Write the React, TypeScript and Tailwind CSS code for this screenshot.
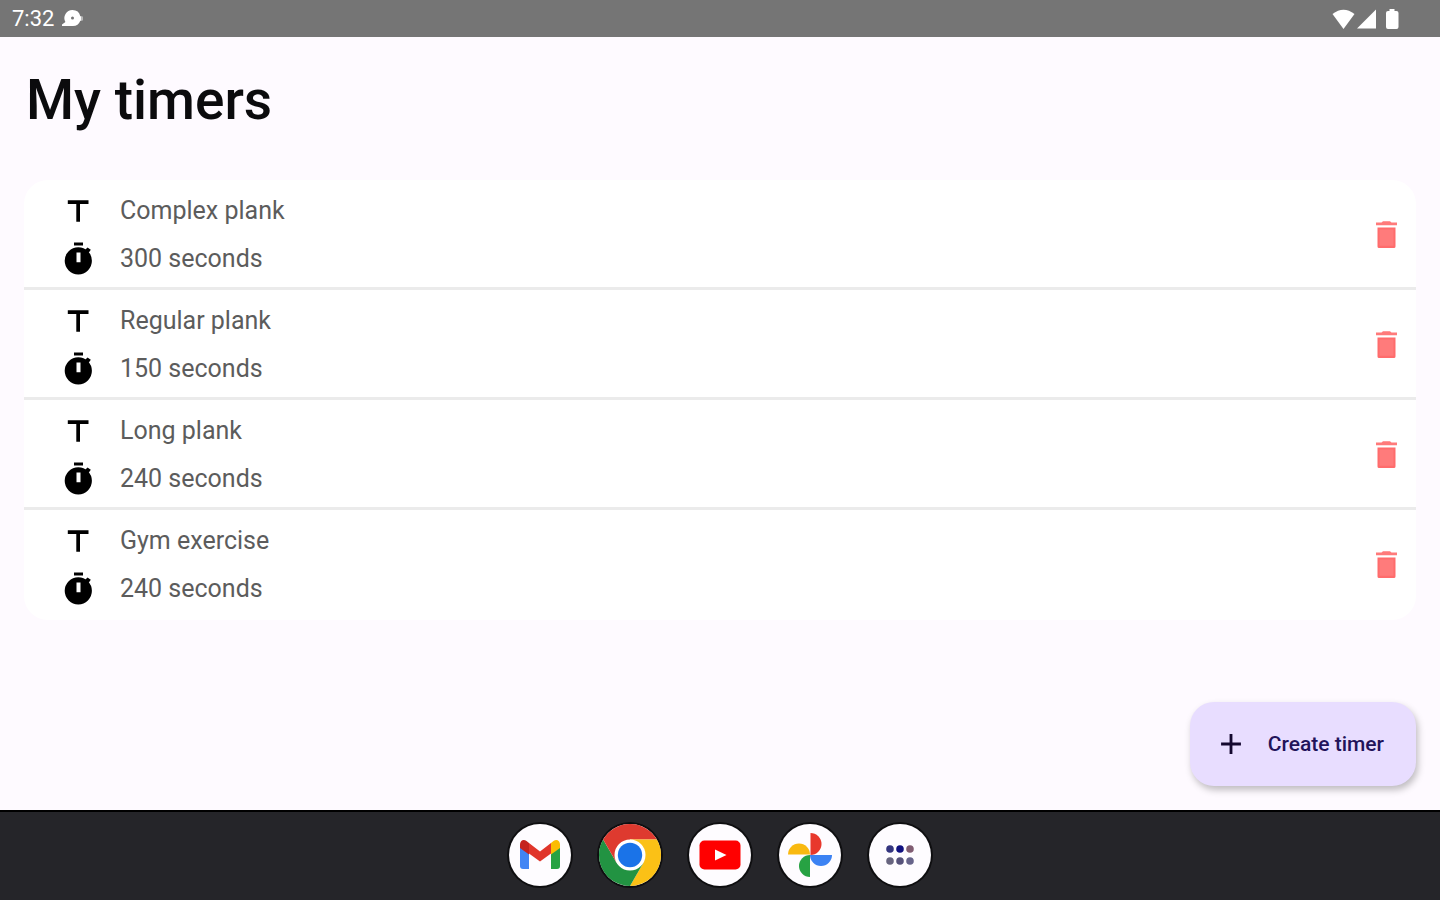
import type { ReactNode } from "react";
import { MdAdd } from "react-icons/md";

type Timer = { name: string; seconds: number };

const timers: Timer[] = [
  { name: "Complex plank", seconds: 300 },
  { name: "Regular plank", seconds: 150 },
  { name: "Long plank", seconds: 240 },
  { name: "Gym exercise", seconds: 240 },
];

function StatusBar() {
  return (
    <header className="flex h-[37px] shrink-0 items-center justify-between bg-[#757575] pr-10 pl-3 text-white">
      <div className="flex items-center gap-2">
        <time className="text-[22px] leading-9">7:32</time>
        <svg width="24" height="20" viewBox="0 0 24 20" aria-hidden="true">
          <path
            fill="#fff"
            fillRule="evenodd"
            d="M10.500 1a8 8 0 0 1 7.800 6.200h1.200v4.600h-1.200A8 8 0 0 1 10.500 17H0v-1.500l3.400-2.600A8 8 0 0 1 10.500 1Zm0 6.500a1.500 1.500 0 1 0 0 3 1.500 1.500 0 0 0 0-3Z"
          />
          <path d="M19.500 7.500H21v4h-1.500z" fill="#b8b8b8" />
        </svg>
      </div>
      <svg width="68" height="22" viewBox="0 0 68 22" aria-hidden="true">
        <path d="M0.500 6Q11.500-2.500 22.500 6L11.500 21Z" fill="#fff" />
        <path d="M25 20.500 44 1.500V20.500Z" fill="#fff" />
        <path
          d="M57.500 1h5v2H64.500a2 2 0 0 1 2 2v14a2 2 0 0 1-2 2H56a2 2 0 0 1-2-2V5a2 2 0 0 1 2-2h1.500z"
          fill="#fff"
        />
      </svg>
    </header>
  );
}

function TitleIcon() {
  return (
    <svg width="36" height="36" viewBox="0 0 36 36" aria-hidden="true">
      <path d="M7.800 7.300H28.500V11H20V28.800H16.300V11H7.800Z" fill="#000" />
    </svg>
  );
}

function StopwatchIcon() {
  return (
    <svg width="36" height="36" viewBox="0 0 36 36" aria-hidden="true">
      <path d="M14 1.500h9v3h-9z" fill="#000" />
      <path d="M27.500 6.500 30.800 8.800 28.500 12 25 9Z" fill="#000" />
      <path
        fillRule="evenodd"
        d="M18.300 6.200a13.600 13.600 0 1 0 0 27.200 13.600 13.600 0 0 0 0-27.200ZM16.500 11.500h4v9.700h-4Z"
        fill="#000"
      />
    </svg>
  );
}

function TrashIcon() {
  return (
    <svg width="36" height="36" viewBox="0 0 36 36" aria-hidden="true">
      <path d="M8 5.500H13.500L15 4.300H22L23.500 5.500H29V8.200H8Z" fill="#ff7a7a" />
      <path d="M9.500 10.500H27.500V29.500a1.500 1.500 0 0 1-1.500 1.500H11a1.500 1.500 0 0 1-1.500-1.500Z" fill="#ff6c6c" />
      <path d="M11.500 12.500H25.500V28.800H11.500Z" fill="#ff7b7b" />
    </svg>
  );
}

function TimerRow({ timer }: { timer: Timer }) {
  return (
    <li className="flex h-[110px] items-center justify-between border-b-3 border-[#ebebeb] pt-0.5 pr-3 pl-9 last:border-transparent">
      <div className="flex flex-col gap-3 text-[25px] leading-9 text-[#5c5c5c]">
        <div className="flex items-center gap-6">
          <TitleIcon />
          <span>{timer.name}</span>
        </div>
        <div className="flex items-center gap-6">
          <StopwatchIcon />
          <span>{timer.seconds} seconds</span>
        </div>
      </div>
      <button type="button" aria-label={`Delete ${timer.name}`}>
        <TrashIcon />
      </button>
    </li>
  );
}

function GmailIcon() {
  return (
    <svg width="42" height="32" viewBox="0 0 42 32" aria-hidden="true">
      <path d="M1 6 10 12V30H4a3 3 0 0 1-3-3Z" fill="#4285f4" />
      <path d="M32 12 41 6V27a3 3 0 0 1-3 3H32Z" fill="#27a243" />
      <path d="M32 4 34.500 2C37.500-.3 41 1.500 41 5.500V9L32 15.500Z" fill="#fbbc04" />
      <path d="M10 4 21 12.500 32 4V14.500L21 22.500 10 14.500Z" fill="#e0352b" />
      <path d="M1 9V5.500C1 1.500 4.500-.3 7.500 2L10 4V15.500Z" fill="#c5221f" />
    </svg>
  );
}

function ChromeIcon() {
  return (
    <svg width="62" height="62" viewBox="0 0 62 62" aria-hidden="true">
      <path d="M31 31 4.150 15.500A31 31 0 0 1 57.850 15.500H31Z" fill="#de3a2f" />
      <path d="M31 15.500H57.850A31 31 0 0 1 31 62L44.420 38.750Z" fill="#fbc116" />
      <path d="M17.580 38.750 4.150 15.500A31 31 0 0 0 31 62L44.420 38.750Z" fill="#229342" />
      <path d="M4.150 15.500 17.580 38.750 31 15.500Z" fill="#de3a2f" />
      <circle cx="31" cy="31" r="15.500" fill="#fff" />
      <circle cx="31" cy="31" r="12.200" fill="#1a73e8" />
    </svg>
  );
}

function YouTubeIcon() {
  return (
    <svg width="42" height="30" viewBox="0 0 42 30" aria-hidden="true">
      <rect x="0.500" y="0.500" width="41" height="29" rx="5" fill="#ff0000" />
      <path d="M16 9.500 27.500 15 16 20.500Z" fill="#fff" />
    </svg>
  );
}

function PhotosIcon() {
  return (
    <svg width="44" height="44" viewBox="0 0 44 44" aria-hidden="true">
      <path d="M22.500 0a11 11 0 0 1 0 22Z" fill="#e8382c" />
      <path d="M44 22a11 11 0 0 1-22 0Z" fill="#3c82f3" />
      <path d="M22 44a11 11 0 0 1 0-22Z" fill="#27a243" />
      <path d="M0 21.500a11 11 0 0 1 22 0Z" fill="#f9b910" />
    </svg>
  );
}

function AppsIcon() {
  return (
    <svg width="30" height="22" viewBox="0 0 30 22" aria-hidden="true">
      <circle cx="5" cy="5" r="3.800" fill="#34357f" />
      <circle cx="15" cy="5" r="3.800" fill="#101080" />
      <circle cx="25" cy="5" r="3.800" fill="#805c72" />
      <circle cx="5" cy="17" r="3.800" fill="#67647f" />
      <circle cx="15" cy="17" r="3.800" fill="#56527a" />
      <circle cx="25" cy="17" r="3.800" fill="#67648a" />
    </svg>
  );
}

const dockApps: { label: string; icon: ReactNode }[] = [
  { label: "Gmail", icon: <GmailIcon /> },
  { label: "Chrome", icon: <ChromeIcon /> },
  { label: "YouTube", icon: <YouTubeIcon /> },
  { label: "Photos", icon: <PhotosIcon /> },
  { label: "All apps", icon: <AppsIcon /> },
];

function Dock() {
  return (
    <nav
      aria-label="Dock"
      className="flex shrink-0 items-center justify-center gap-7 border-t-2 border-black bg-[#252529] pt-3 pb-3.5"
    >
      {dockApps.map((app) => (
        <button
          key={app.label}
          type="button"
          aria-label={app.label}
          className="flex size-[62px] items-center justify-center rounded-full bg-[#fefcff] ring-2 ring-black/60"
        >
          {app.icon}
        </button>
      ))}
    </nav>
  );
}

export default function App() {
  return (
    <div className="flex min-h-screen flex-col bg-[#fefaff] font-[Roboto,sans-serif]">
      <StatusBar />
      <main className="flex grow flex-col px-6 pt-7 pb-6">
        <h1 className="pl-0.5 text-[55px] leading-[70px] font-medium text-[#0b0b0d]">My timers</h1>
        <ul className="mt-[45px] rounded-3xl bg-white">
          {timers.map((timer) => (
            <TimerRow key={timer.name} timer={timer} />
          ))}
        </ul>
        <button
          type="button"
          className="mt-auto flex h-[84px] items-center gap-5 self-end rounded-3xl bg-[#e8ddff] pr-8 pl-6 text-[21px] leading-8 font-medium text-[#22135a] shadow-[2px_4px_7px_rgba(0,0,0,0.25)]"
        >
          <MdAdd size={34} className="text-[#14082f]" aria-hidden="true" />
          Create timer
        </button>
      </main>
      <Dock />
    </div>
  );
}
